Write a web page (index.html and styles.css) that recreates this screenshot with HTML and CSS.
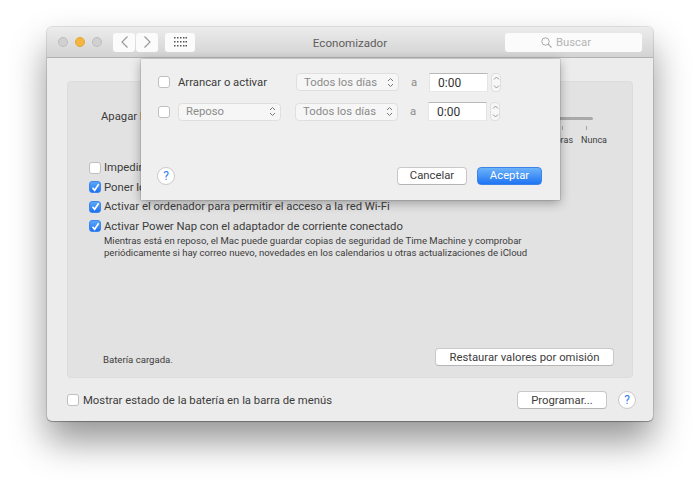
FILE: index.html
```html
<!DOCTYPE html>
<html lang="es">
<head>
<meta charset="utf-8">
<title>Economizador</title>
<link rel="stylesheet" href="styles.css">
</head>
<body>
<div class="window">
  <header class="titlebar">
    <div class="lights">
      <span class="light"></span><span class="light light-min"></span><span class="light"></span>
    </div>
    <div class="nav">
      <button class="tool"><svg width="9" height="14" viewBox="0 0 9 14"><path d="M7.5 1.5 2 7l5.500 5.500" fill="none" stroke="#9a9a9a" stroke-width="1.200"/></svg></button>
      <button class="tool"><svg width="9" height="14" viewBox="0 0 9 14"><path d="M1.500 1.500 7 7l-5.500 5.500" fill="none" stroke="#9a9a9a" stroke-width="1.200"/></svg></button>
    </div>
    <button class="tool tool-grid"><svg width="13" height="10" viewBox="0 0 13 10" fill="#555"><rect x="0" y="0" width="1.500" height="1.500"/><rect x="3" y="0" width="1.500" height="1.500"/><rect x="6" y="0" width="1.500" height="1.500"/><rect x="9" y="0" width="1.500" height="1.500"/><rect x="11.500" y="0" width="1.500" height="1.500"/><rect x="0" y="4" width="1.500" height="1.500"/><rect x="3" y="4" width="1.500" height="1.500"/><rect x="6" y="4" width="1.500" height="1.500"/><rect x="9" y="4" width="1.500" height="1.500"/><rect x="11.500" y="4" width="1.500" height="1.500"/><rect x="0" y="8" width="1.500" height="1.500"/><rect x="3" y="8" width="1.500" height="1.500"/><rect x="6" y="8" width="1.500" height="1.500"/><rect x="9" y="8" width="1.500" height="1.500"/><rect x="11.500" y="8" width="1.500" height="1.500"/></svg></button>
    <div class="title">Economizador</div>
    <div class="search">
      <svg width="11" height="11" viewBox="0 0 11 11"><circle cx="4.500" cy="4.500" r="3.700" fill="none" stroke="#aaa" stroke-width="1"/><path d="M7.200 7.200 10.500 10.500" stroke="#aaa" stroke-width="1.100"/></svg>
      <span>Buscar</span>
    </div>
  </header>

  <main class="content">
    <section class="panel">
      <div class="slider-row">
        <span class="slider-label">Apagar la</span>
        <div class="slider">
          <div class="track"></div>
          <div class="ticks"><i></i><i></i></div>
          <div class="scale"><span>3 horas</span><span>Nunca</span></div>
        </div>
      </div>
      <div class="options">
        <label class="opt"><span class="check"></span>Impedir</label>
        <label class="opt"><span class="check on"><svg width="9" height="9" viewBox="0 0 9 9"><path d="M1.500 4.800 3.600 7.300 7.700 1.200" fill="none" stroke="#fff" stroke-width="1.600"/></svg></span>Poner los</label>
        <label class="opt"><span class="check on"><svg width="9" height="9" viewBox="0 0 9 9"><path d="M1.500 4.800 3.600 7.300 7.700 1.200" fill="none" stroke="#fff" stroke-width="1.600"/></svg></span>Activar el ordenador para permitir el acceso a la red Wi-Fi</label>
        <label class="opt"><span class="check on"><svg width="9" height="9" viewBox="0 0 9 9"><path d="M1.500 4.800 3.600 7.300 7.700 1.200" fill="none" stroke="#fff" stroke-width="1.600"/></svg></span>Activar Power Nap con el adaptador de corriente conectado</label>
        <p class="desc">Mientras está en reposo, el Mac puede guardar copias de seguridad de Time Machine y comprobar<br>periódicamente si hay correo nuevo, novedades en los calendarios u otras actualizaciones de iCloud</p>
      </div>
      <div class="panel-foot">
        <span class="status">Batería cargada.</span>
        <button class="btn btn-restore">Restaurar valores por omisión</button>
      </div>
    </section>
    <footer class="foot">
      <label class="opt opt-foot"><span class="check"></span>Mostrar estado de la batería en la barra de menús</label>
      <button class="btn btn-program">Programar...</button>
      <button class="help">?</button>
    </footer>
  </main>

  <div class="sheet">
    <div class="sched">
      <span class="check"></span>
      <span class="sched-name">Arrancar o activar</span>
      <div class="select select-day"><span>Todos los días</span><svg width="7" height="11" viewBox="0 0 7 11"><path d="M1 4 3.500 1.500 6 4M1 7l2.500 2.500L6 7" fill="none" stroke="#777" stroke-width="1"/></svg></div>
      <span class="at">a</span>
      <div class="time">0:00</div>
      <div class="stepper"><svg width="7" height="15" viewBox="0 0 7 15"><path d="M1 4.500 3.500 2 6 4.500M1 10.500 3.500 13 6 10.500" fill="none" stroke="#999" stroke-width="1"/></svg></div>
    </div>
    <div class="sched">
      <span class="check"></span>
      <div class="select select-kind"><span>Reposo</span><svg width="7" height="11" viewBox="0 0 7 11"><path d="M1 4 3.500 1.500 6 4M1 7l2.500 2.500L6 7" fill="none" stroke="#777" stroke-width="1"/></svg></div>
      <div class="select select-day"><span>Todos los días</span><svg width="7" height="11" viewBox="0 0 7 11"><path d="M1 4 3.500 1.500 6 4M1 7l2.500 2.500L6 7" fill="none" stroke="#777" stroke-width="1"/></svg></div>
      <span class="at">a</span>
      <div class="time">0:00</div>
      <div class="stepper"><svg width="7" height="15" viewBox="0 0 7 15"><path d="M1 4.500 3.500 2 6 4.500M1 10.500 3.500 13 6 10.500" fill="none" stroke="#999" stroke-width="1"/></svg></div>
    </div>
    <div class="sheet-actions">
      <button class="help">?</button>
      <button class="btn btn-cancel">Cancelar</button>
      <button class="btn btn-accept">Aceptar</button>
    </div>
  </div>
</div>
</body>
</html>
```

FILE: styles.css
```css
* { box-sizing: border-box; }
html, body { height: 100%; }
body {
  margin: 0;
  padding: 27px 47px 0;
  background: #fff;
  overflow: hidden;
  font-family: "Roboto", "Liberation Sans", sans-serif;
  font-size: 11.300px;
  color: #3c3c3c;
}
button { font: inherit; padding: 0; margin: 0; cursor: default; }
.window {
  position: relative;
  width: 606px;
  height: 394px;
  background: #ececec;
  border-radius: 5px;
  box-shadow: 0 0 0 1px rgba(0,0,0,.1), 0 1px 1px rgba(0,0,0,.25), 0 20px 36px rgba(0,0,0,.42);
}
.titlebar {
  position: relative;
  display: flex;
  align-items: center;
  height: 31px;
  padding: 0 11px;
  background: linear-gradient(#ececec, #d3d3d3);
  border-bottom: 1px solid #b2b2b2;
  border-radius: 5px 5px 0 0;
}
.lights { display: flex; gap: 7px; margin-right: 11px; }
.light {
  width: 10px; height: 10px; border-radius: 50%;
  background: #d0d0d0; border: 1px solid #bdbdbd;
}
.light-min { background: #f6b440; border-color: #e6a532; }
.nav { display: flex; gap: 1px; margin-right: 7px; }
.tool {
  display: flex; align-items: center; justify-content: center;
  width: 22px; height: 19px;
  border: 0; border-radius: 3px;
  background: #fbfbfb;
}
.tool-grid { width: 30px; }
.title {
  position: absolute; left: 0; right: 0; top: 9px;
  text-align: center;
  font-size: 11.600px; line-height: 15px;
  color: #5e5e5e;
  pointer-events: none;
}
.search {
  display: flex; align-items: center; justify-content: center; gap: 4px;
  width: 137px; height: 19px; margin-left: auto; padding: 1px 15px 0 0;
  background: #fbfbfb; border-radius: 3px;
  color: #b4b4b4;
}
.content { padding: 23px 20px 0; }
.panel {
  position: relative;
  height: 297px;
  padding: 24px 18px 0 21px;
  background: #e2e2e2;
  border: 1px solid #dcdcdc;
  border-radius: 4px;
  display: flex;
  flex-direction: column;
}
.slider-row { display: flex; height: 46px; }
.slider-label { line-height: 21px; width: 150px; margin-left: 12px; }
.slider { flex: 1; padding: 11px 21px 0 0; }
.track { height: 3px; background: #a9a9a9; border-radius: 2px; }
.ticks { display: flex; justify-content: flex-end; gap: 23px; padding: 6px 6px 0 0; }
.ticks i { width: 1px; height: 4px; background: #a5a5a5; }
.scale { display: flex; justify-content: flex-end; gap: 8px; font-size: 9px; line-height: 13px; margin: 4px -14px 0 0; }
.options { padding-top: 6px; }
.opt { display: flex; align-items: center; gap: 3px; height: 19.500px; white-space: nowrap; }
.check {
  flex: none;
  display: flex; align-items: center; justify-content: center;
  width: 12px; height: 12px;
  background: #fff;
  border: 1px solid #bfbfbf;
  border-radius: 3px;
}
.check.on { background: linear-gradient(#5aa8fb, #1f6ff0); border-color: #3c86ee; }
.desc { margin: -1px 0 0 15px; font-size: 9.550px; line-height: 12px; }
.panel-foot {
  display: flex; align-items: center; justify-content: space-between;
  margin: auto 0 11px 14px;
}
.status { padding-top: 4px; font-size: 9.600px; }
.btn {
  height: 18px;
  background: #fff;
  border: 1px solid #c8c8c8;
  border-bottom-color: #b5b5b5;
  border-radius: 4px;
  color: #3c3c3c;
  text-align: center;
}
.btn-restore { width: 179px; }
.foot { display: flex; align-items: center; height: 44px; margin-right: -3px; }
.opt-foot { margin-right: auto; gap: 4px; }
.btn-program { width: 90px; }
.help {
  width: 18px; height: 18px; margin-left: 11px;
  border-radius: 50%;
  background: #fff;
  border: 1px solid #c9c9c9;
  color: #2f7ff0;
  font-size: 12px; line-height: 16px;
  text-align: center;
}
.sheet {
  position: absolute; left: 94px; top: 32px;
  width: 419px; height: 141px;
  padding: 13px 18px 0;
  background: #efefef;
  box-shadow: 0 0 1px rgba(0,0,0,.55), 0 3px 10px rgba(0,0,0,.32);
}
.sched { display: flex; align-items: center; height: 20px; margin-bottom: 9.500px; }
.sched .check { margin-right: 8px; margin-left: -1px; }
.sched-name { width: 118px; color: #3c3c3c; }
.select {
  display: flex; align-items: center; justify-content: space-between;
  height: 18px; padding: 0 4px 0 7px;
  background: #f6f6f6;
  border: 1px solid #dfdfdf;
  border-radius: 4px;
  color: #8b8b8b;
}
.select-day { width: 103px; }
.select-kind { width: 103px; margin-right: 14px; }
.at { width: 30px; text-align: center; color: #8b8b8b; }
.time {
  width: 59px; height: 19px;
  padding-left: 8px;
  background: #fff;
  border-top: 1px solid #b9b9b9;
  border-left: 1px solid #e4e4e4;
  border-right: 1px solid #e4e4e4;
  border-bottom: 1px solid #e8e8e8;
  font-size: 12px; line-height: 18px;
  color: #333;
}
.stepper {
  display: flex; align-items: center; justify-content: center;
  width: 10px; height: 19px; margin-left: 3px;
  background: #f7f7f7;
  border: 1px solid #dedede;
  border-radius: 4px;
}
.sheet-actions { display: flex; align-items: center; margin-top: 45px; }
.sheet-actions .help { margin: 0 auto 0 -2px; }
.btn-cancel { width: 70px; }
.btn-accept {
  width: 65px; margin-left: 10px;
  background: linear-gradient(#6cb3fa, #1f74f2);
  border-color: #3a84ea;
  color: #fff;
}
```
